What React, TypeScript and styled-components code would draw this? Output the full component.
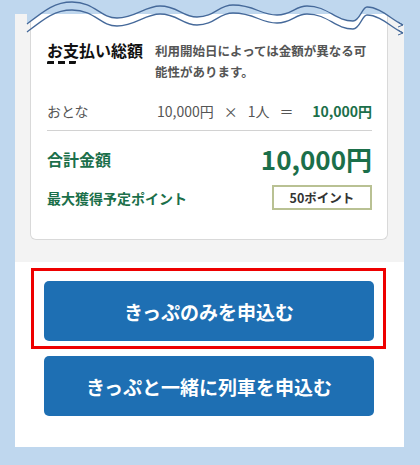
import React from 'react'
import styled, { createGlobalStyle } from 'styled-components'

const GlobalStyle = createGlobalStyle`
  html, body {
    margin: 0;
    padding: 0;
    background: #bfd7ee;
  }
  body {
    font-family: "Noto Sans CJK JP", "Noto Sans", sans-serif;
  }
`

const PageFrame = styled.div`
  position: relative;
  width: 420px;
  height: 465px;
  box-sizing: border-box;
  padding: 14px 16px 18px 15px;
`

const Panel = styled.div`
  display: flex;
  flex-direction: column;
  background: #ffffff;
`

const SummaryArea = styled.section`
  background: #f3f3f3;
  padding: 0 16px 22px 15px;
`

const Card = styled.div`
  background: #ffffff;
  border: 1px solid #d9d9d9;
  border-top: none;
  border-radius: 0 0 6px 6px;
  padding: 26px 15px 29px 16px;
`

const TitleRow = styled.div`
  display: flex;
  align-items: flex-start;
`

const TitleBlock = styled.div`
  width: 108px;
  flex-shrink: 0;
`

const Title = styled.h2`
  margin: 0;
  font-size: 16px;
  line-height: 20px;
  font-weight: 700;
  color: #111;
`

const Dashes = styled.div`
  margin-top: 1px;
  width: 29px;
  height: 3px;
  background: repeating-linear-gradient(90deg, #111 0 7px, transparent 7px 11px);
  transform: skewX(-20deg);
`

const Note = styled.p`
  margin: 0;
  font-size: 12.5px;
  line-height: 21px;
  font-weight: 700;
  color: #555;
`

const PriceRow = styled.div`
  display: flex;
  align-items: center;
  margin-top: 19px;
  padding-bottom: 9px;
  border-bottom: 1px solid #d2d2d2;
  font-size: 14px;
  line-height: 20px;
  color: #555;
`

const PriceLabel = styled.span`
  width: 110px;
  flex-shrink: 0;
`

const PriceCalc = styled.span`
  display: flex;
  gap: 10px;
`

const PriceAmount = styled.span`
  margin-left: auto;
  font-weight: 700;
  color: #1b6f4a;
`

const SumRow = styled.div<{ $gap: number }>`
  display: flex;
  align-items: center;
  justify-content: space-between;
  margin-top: ${p => p.$gap}px;
  color: #1b6f4a;
  font-weight: 700;
`

const SumLabel = styled.span<{ $size: number }>`
  font-size: ${p => p.$size}px;
  line-height: 22px;
`

const SumAmount = styled.span`
  font-size: 26px;
  line-height: 32px;
  font-weight: 700;
`

const PointBox = styled.span`
  box-sizing: border-box;
  width: 100px;
  height: 25px;
  border: 2px solid #b9c193;
  display: flex;
  align-items: center;
  justify-content: center;
  font-size: 12.5px;
  font-weight: 700;
  color: #333;
`

const ActionArea = styled.section`
  padding: 6px 0 31px;
  display: flex;
  flex-direction: column;
`

const Highlight = styled.div`
  margin: 0 18px 0 16px;
  border: 3px solid #ee0000;
  padding: 10px 9px 5px 10px;
`

const ApplyButton = styled.button<{ $inset?: boolean }>`
  display: flex;
  align-items: center;
  justify-content: center;
  height: 60px;
  width: 330px;
  margin: ${p => (p.$inset ? '7px 0 0 29px' : '0')};
  border: none;
  border-radius: 5px;
  background: #1e6fb3;
  color: #ffffff;
  font-family: "Noto Sans CJK JP", sans-serif;
  font-size: 19px;
  font-weight: 700;
  cursor: pointer;
`

const WaveLayer = styled.svg`
  position: absolute;
  left: 0;
  top: 0;
  pointer-events: none;
`

const topLine =
  'M27,24 C45,10 55,2 72,2 C95,2 100,18 117,18 C135,18 145,6 160,6 C178,6 182,17 197,17 C215,17 218,5 233,5 C255,5 260,15 277,15 C292,15 295,6 307,6 C328,6 335,21 353,21 C360,21 362,7 367,7 C380,7 392,20 403,25'
const lowLine =
  'M27,32 C45,18 55,10 72,10 C95,10 100,26 117,26 C135,26 145,14 160,14 C178,14 182,25 197,25 C215,25 218,13 233,13 C255,13 260,23 277,23 C292,23 295,14 307,14 C328,14 335,29 353,29 C360,29 362,15 367,15 C380,15 392,28 403,33'

const TornEdge = () => (
  <WaveLayer width="420" height="40" viewBox="0 0 420 40">
    <path d={`M27,0 L27,24 ${topLine.slice(7)} L405,25 L405,0 Z`} fill="#bfd7ee" />
    <path d={topLine} fill="none" stroke="#45699a" strokeWidth="1.3" />
    <path d={lowLine} fill="none" stroke="#45699a" strokeWidth="1.3" />
    <path d="M398,22 L403,25 L398,27 M398,30 L403,33 L398,35" fill="none" stroke="#45699a" strokeWidth="1" />
  </WaveLayer>
)

const App: React.FC = () => {
  return (
    <>
      <GlobalStyle />
      <PageFrame>
        <Panel>
          <SummaryArea>
            <Card>
              <TitleRow>
                <TitleBlock>
                  <Title>お支払い総額</Title>
                  <Dashes />
                </TitleBlock>
                <Note>利用開始日によっては金額が異なる可能性があります。</Note>
              </TitleRow>
              <PriceRow>
                <PriceLabel>おとな</PriceLabel>
                <PriceCalc>
                  <span>10,000円</span>
                  <span>×</span>
                  <span>1人</span>
                  <span>＝</span>
                </PriceCalc>
                <PriceAmount>10,000円</PriceAmount>
              </PriceRow>
              <SumRow $gap={12}>
                <SumLabel $size={16}>合計金額</SumLabel>
                <SumAmount>10,000円</SumAmount>
              </SumRow>
              <SumRow $gap={10}>
                <SumLabel $size={14}>最大獲得予定ポイント</SumLabel>
                <PointBox>50ポイント</PointBox>
              </SumRow>
            </Card>
          </SummaryArea>
          <ActionArea>
            <Highlight>
              <ApplyButton>きっぷのみを申込む</ApplyButton>
            </Highlight>
            <ApplyButton $inset>きっぷと一緒に列車を申込む</ApplyButton>
          </ActionArea>
        </Panel>
        <TornEdge />
      </PageFrame>
    </>
  )
}

export default App
